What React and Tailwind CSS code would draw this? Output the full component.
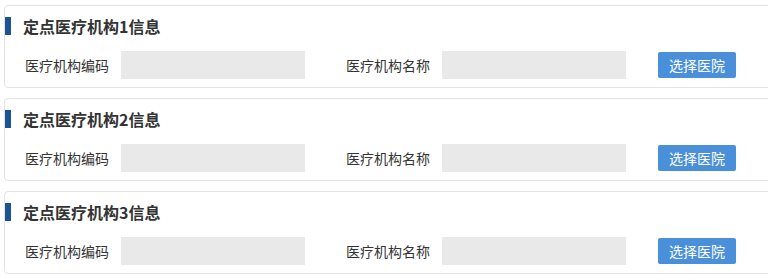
import React from "react";

const hospitals = [1, 2, 3];

function HospitalCard({ index }) {
  return (
    <div className="ml-[4px] w-[780px] h-[83px] border border-[#e3e3e3] rounded-[4px] bg-white">
      <div className="flex items-center h-[28px] mt-[6px]">
        <span className="w-[6px] h-[18px] bg-[#1c5391]" />
        <h3 className="ml-[12px] text-[16px] font-bold text-[#333]">定点医疗机构{index}信息</h3>
      </div>
      <div className="flex items-center mt-[11px] text-[14px] text-[#333]">
        <label className="ml-[20px] w-[96px]">医疗机构编码</label>
        <div className="w-[184px] h-[28px] bg-[#e9e9e9]" />
        <label className="ml-[41px] w-[96px]">医疗机构名称</label>
        <div className="w-[184px] h-[28px] bg-[#e9e9e9]" />
        <button
          type="button"
          className="ml-[32px] w-[78px] h-[26px] rounded-[2px] bg-[#4a8fd9] text-white text-[14px]"
        >
          选择医院
        </button>
      </div>
    </div>
  );
}

export default function App() {
  return (
    <div
      className="w-[768px] h-[278px] overflow-hidden bg-white pt-[5px] flex flex-col gap-[10px]"
      style={{ fontFamily: '"Microsoft YaHei", "Noto Sans CJK SC", sans-serif' }}
    >
      {hospitals.map((i) => (
        <HospitalCard key={i} index={i} />
      ))}
    </div>
  );
}
